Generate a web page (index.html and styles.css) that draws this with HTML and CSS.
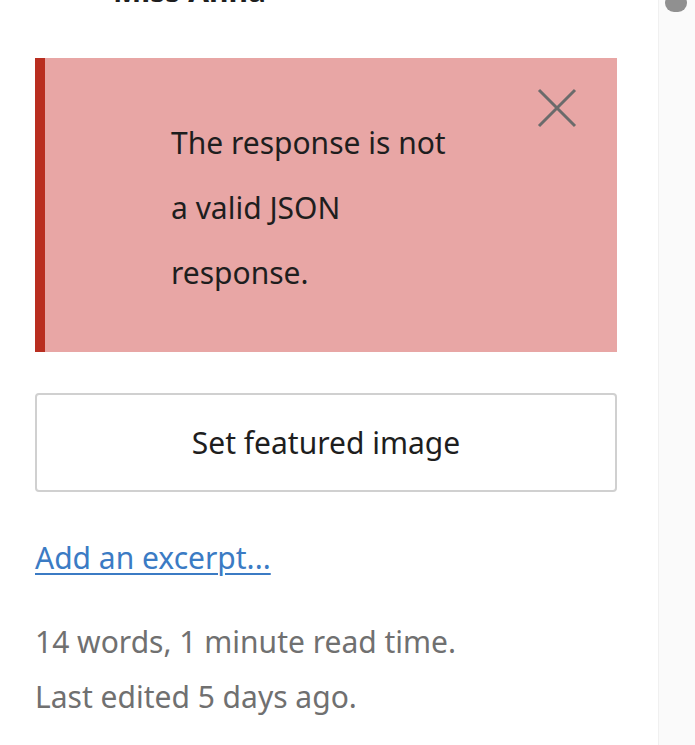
FILE: index.html
```html
<!DOCTYPE html>
<html>
<head>
<meta charset="utf-8">
<link rel="stylesheet" href="styles.css">
</head>
<body>
<div class="page">
  <main class="panel">
    <div class="author">Miss Anna</div>
    <div class="notice">
      <div class="notice-text">The response is not a valid JSON response.</div>
      <button class="close" aria-label="Dismiss">
        <svg width="40" height="40" viewBox="0 0 40 40"><path d="M2 2 L38 38 M38 2 L2 38" stroke="#6b6b6b" stroke-width="3" fill="none"/></svg>
      </button>
    </div>
    <button class="featured">Set featured image</button>
    <a class="excerpt" href="#">Add an excerpt...</a>
    <div class="meta">
      <div>14 words, 1 minute read time.</div>
      <div>Last edited 5 days ago.</div>
    </div>
  </main>
  <div class="scrollbar"><div class="thumb"></div></div>
</div>
</body>
</html>
```
FILE: styles.css
```css
html, body {
  margin: 0;
  padding: 0;
  background: #ffffff;
  height: 100%;
  overflow: hidden;
}
.page {
  display: flex;
  height: 745px;
  font-family: "Noto Sans", "Open Sans", sans-serif;
}
.panel {
  flex: 1;
  padding-left: 35px;
  padding-right: 41px;
  display: flex;
  flex-direction: column;
  align-items: flex-start;
}
.author {
  font-weight: 700;
  font-size: 30px;
  line-height: 30px;
  color: #1e1e1e;
  margin-top: -24px;
  padding-left: 78px;
}
.notice {
  margin-top: 52px;
  width: 582px;
  height: 294px;
  box-sizing: border-box;
  background: #e8a6a5;
  border-left: 10px solid #b92e20;
  display: flex;
  justify-content: space-between;
  align-items: flex-start;
}
.notice-text {
  margin-top: 52px;
  margin-left: 126px;
  width: 288px;
  font-size: 30px;
  line-height: 65px;
  color: #1e1e1e;
}
.close {
  background: none;
  border: 0;
  padding: 0;
  margin-top: 30px;
  margin-right: 40px;
  width: 40px;
  height: 40px;
  display: flex;
}
.featured {
  margin-top: 41px;
  width: 582px;
  height: 99px;
  box-sizing: border-box;
  border: 2px solid #d0d0d0;
  border-radius: 4px;
  background: #ffffff;
  font-family: "Noto Sans", "Open Sans", sans-serif;
  font-size: 30px;
  color: #1e1e1e;
}
.excerpt {
  margin-top: 42px;
  font-size: 30px;
  line-height: 48px;
  color: #3b7bc4;
  text-decoration: underline;
  text-underline-offset: 4px;
  text-decoration-thickness: 2px;
}
.meta {
  margin-top: 32px;
  font-size: 30px;
  line-height: 55px;
  color: #707070;
}
.scrollbar {
  width: 37px;
  background: #fafafa;
  border-left: 1px solid #f0f0f0;
  box-sizing: border-box;
}
.thumb {
  width: 22px;
  height: 18px;
  margin-top: -6px;
  margin-left: 6px;
  background: #909090;
  border-radius: 11px;
}
```
